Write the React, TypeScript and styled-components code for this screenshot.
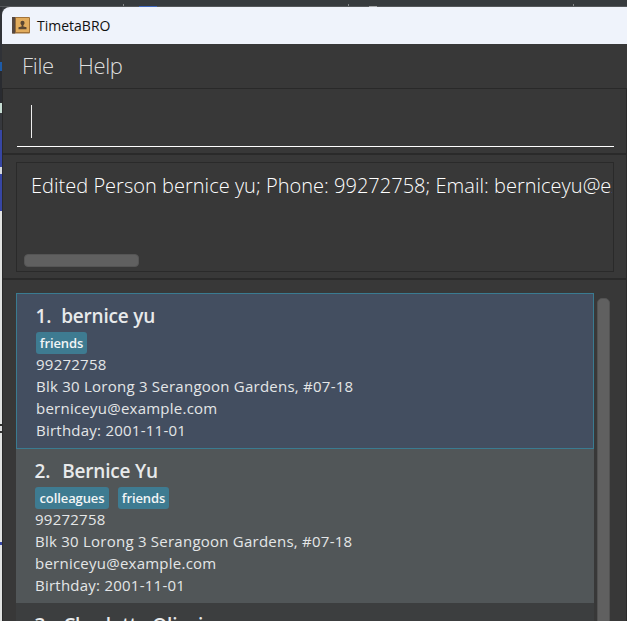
import React from "react";
import styled, { createGlobalStyle } from "styled-components";

const GlobalStyle = createGlobalStyle`
  * { box-sizing: border-box; }
  body { margin: 0; overflow: hidden; }
`;

const sans = `"Open Sans", "Noto Sans", sans-serif`;

const Desktop = styled.div`
  display: grid;
  grid-template: 7px 614px / 2px 625px;
  width: 627px;
  height: 621px;
  overflow: hidden;
  background: #363a3e;
  font-family: ${sans};
`;

const TopStrip = styled.div`
  grid-column: 1 / 3;
  display: flex;
  align-items: flex-end;
  background: #373b3e;
  border-bottom: 1px solid #55585b;
`;

const Gap = styled.div<{ $w: number }>`
  width: ${(p) => p.$w}px;
`;

const Tick = styled.div`
  width: 1px;
  height: 2px;
  background: #85888a;
`;

const BlueTab = styled.div`
  width: 18px;
  height: 1px;
  margin-bottom: -1px;
  background: #3f67bd;
`;

const PaleTab = styled(BlueTab)`
  width: 8px;
  background: #a5a7a9;
`;

const LeftStrip = styled.div`
  display: flex;
  flex-direction: column;
  background: #303237;
`;

const Sliver = styled.div<{ $h: number; $c: string }>`
  flex: none;
  height: ${(p) => p.$h}px;
  background: ${(p) => p.$c};
`;

const Window = styled.div`
  display: flex;
  flex-direction: column;
  overflow: hidden;
  border-top-left-radius: 8px;
  background: #383838;
`;

const TitleBar = styled.div`
  flex: none;
  display: flex;
  align-items: center;
  height: 37px;
  padding-left: 10px;
  gap: 7px;
  background: #eff3fb;
`;

const Title = styled.span`
  font-size: 14px;
  line-height: 20px;
  color: #111;
`;

const MenuBar = styled.div`
  flex: none;
  display: flex;
  align-items: center;
  height: 44px;
  padding: 0 0 2px 20px;
  gap: 24px;
`;

const MenuItem = styled.span`
  font-size: 22px;
  font-weight: 300;
  line-height: 30px;
  letter-spacing: -0.3px;
  color: #dedede;
`;

const CommandPane = styled.div`
  flex: none;
  height: 67px;
  padding: 14px 12px 0 14px;
  border: 1px solid #292929;
  border-bottom-width: 2px;
  border-bottom-color: #2a2a2a;
`;

const CommandField = styled.div`
  height: 44px;
  padding: 2px 0 0 14px;
  border-bottom: 1px solid #fff;
`;

const Caret = styled.div`
  width: 1px;
  height: 33px;
  background: #eee;
`;

const ResultPane = styled.div`
  flex: none;
  height: 125px;
  padding: 7px 12px 0 13px;
  border: solid #2a2a2a;
  border-width: 0 1px 2px;
`;

const ResultBox = styled.div`
  display: flex;
  flex-direction: column;
  justify-content: space-between;
  height: 110px;
  padding: 9px 1px 4px 7px;
  border: 1px solid #2a2a2a;
  overflow: hidden;
`;

const ResultText = styled.div`
  padding-left: 7px;
  overflow: hidden;
  white-space: nowrap;
  font-size: 20px;
  font-weight: 300;
  line-height: 28px;
  letter-spacing: 0.02px;
  color: #fff;
`;

const HorizontalThumb = styled.div`
  width: 115px;
  height: 13px;
  border-radius: 4px;
  background: #606060;
  border: 1px solid #555;
`;

const ListPane = styled.div`
  flex: 1;
  display: flex;
  gap: 4px;
  min-height: 0;
  padding: 13px 12px 0 13px;
  border: solid #2a2a2a;
  border-width: 0 1px;
`;

const PersonList = styled.div`
  width: 578px;
  overflow: hidden;
`;

const VerticalThumb = styled.div`
  width: 13px;
  height: 340px;
  margin: 5px 0 0 -1px;
  border: 1px solid #525252;
  border-radius: 5px;
  background: #606060;
`;

const Card = styled.div<{ $tone: "selected" | "even" | "odd" }>`
  height: ${(p) => (p.$tone === "selected" ? 156 : 154)}px;
  padding: 9px 0 0 19px;
  border: ${(p) => (p.$tone === "selected" ? "1px solid #3a7b91" : "none")};
  background: ${(p) =>
    ({ selected: "#434e60", even: "#515658", odd: "#3c3e3f" })[p.$tone]};
  color: #e4e6e7;
`;

const Name = styled.div<{ $gap: number }>`
  display: flex;
  gap: ${(p) => p.$gap}px;
  height: 29px;
  margin-left: -0.5px;
  font-size: 19px;
  font-weight: 600;
  line-height: 27px;
  letter-spacing: -0.2px;
  color: #e8eaeb;
`;

const Tags = styled.div`
  display: flex;
  gap: 9px;
  height: 22px;
  margin-bottom: -1px;
`;

const Tag = styled.span<{ $w: number }>`
  width: ${(p) => p.$w}px;
  border-radius: 3px;
  background: #3e7b91;
  color: #f2f5f6;
  text-align: center;
  font-size: 13px;
  font-weight: 600;
  line-height: 22px;
  letter-spacing: -0.1px;
`;

const Detail = styled.div`
  height: 22px;
  font-size: 15px;
  line-height: 22px;
  letter-spacing: 0.24px;
  white-space: nowrap;
`;

const AddressBookIcon = () => (
  <svg width="18" height="17" viewBox="0 0 18 17">
    <rect width="18" height="16.5" rx="1" fill="#a3743a" />
    <rect width="3.2" height="16.5" fill="#564841" />
    <rect x="4" y="1" width="13" height="14" fill="#e2ac5d" />
    <path
      d="M10.5 3.8c1.300 0 2 .9 2 2.100 0 1-.5 1.700-1.100 2.200v1.300l3.100 .9v1.900H6.500v-1.900l3.100-.9V8.100c-.6-.5-1.100-1.200-1.100-2.200 0-1.200.7-2.100 2-2.100z"
      fill="#5a4632"
    />
  </svg>
);

type Tone = "selected" | "even" | "odd";
type Person = { name: string; tone: Tone; gap: number; tags: [string, number][] };

const people: Person[] = [
  { name: "bernice yu", tone: "selected", gap: 10, tags: [["friends", 51]] },
  { name: "Bernice Yu", tone: "even", gap: 12, tags: [["colleagues", 74], ["friends", 51]] },
  { name: "Charlotte Oliveiro", tone: "odd", gap: 13, tags: [] },
];

const slivers: [number, string][] = [
  [55, "#303237"], [9, "#1d5ba8"], [32, "#292b30"], [10, "#c6dcd2"],
  [17, "#36383d"], [37, "#3746a4"], [7, "#d6d9df"], [37, "#3746a4"],
  [213, "#e2e3e2"], [2, "#30312f"], [5, "#dfdfdf"], [2, "#333"],
  [109, "#e2e3e2"], [3, "#3746a4"], [76, "#e2e3e2"],
];

export default function App() {
  return (
    <>
      <GlobalStyle />
      <Desktop>
        <TopStrip>
          <Gap $w={123} />
          <Tick />
          <Gap $w={15} />
          <BlueTab />
          <Gap $w={191} />
          <Tick />
          <Gap $w={20} />
          <PaleTab />
          <Gap $w={196} />
          <Tick />
        </TopStrip>
        <LeftStrip>
          {slivers.map(([h, c], i) => (
            <Sliver key={i} $h={h} $c={c} />
          ))}
        </LeftStrip>
        <Window>
          <TitleBar>
            <AddressBookIcon />
            <Title>TimetaBRO</Title>
          </TitleBar>
          <MenuBar>
            <MenuItem>File</MenuItem>
            <MenuItem>Help</MenuItem>
          </MenuBar>
          <CommandPane>
            <CommandField>
              <Caret />
            </CommandField>
          </CommandPane>
          <ResultPane>
            <ResultBox>
              <ResultText>
                Edited Person bernice yu; Phone: 99272758; Email: berniceyu@example.com
              </ResultText>
              <HorizontalThumb />
            </ResultBox>
          </ResultPane>
          <ListPane>
            <PersonList>
              {people.map((p, i) => (
                <Card key={p.name} $tone={p.tone}>
                  <Name $gap={p.gap}>
                    <span>{i + 1}.</span>
                    <span>{p.name}</span>
                  </Name>
                  {p.tags.length > 0 && (
                    <>
                      <Tags>
                        {p.tags.map(([label, w]) => (
                          <Tag key={label} $w={w}>{label}</Tag>
                        ))}
                      </Tags>
                      <Detail>99272758</Detail>
                      <Detail>Blk 30 Lorong 3 Serangoon Gardens, #07-18</Detail>
                      <Detail>berniceyu@example.com</Detail>
                      <Detail>Birthday: 2001-11-01</Detail>
                    </>
                  )}
                </Card>
              ))}
            </PersonList>
            <VerticalThumb />
          </ListPane>
        </Window>
      </Desktop>
    </>
  );
}
